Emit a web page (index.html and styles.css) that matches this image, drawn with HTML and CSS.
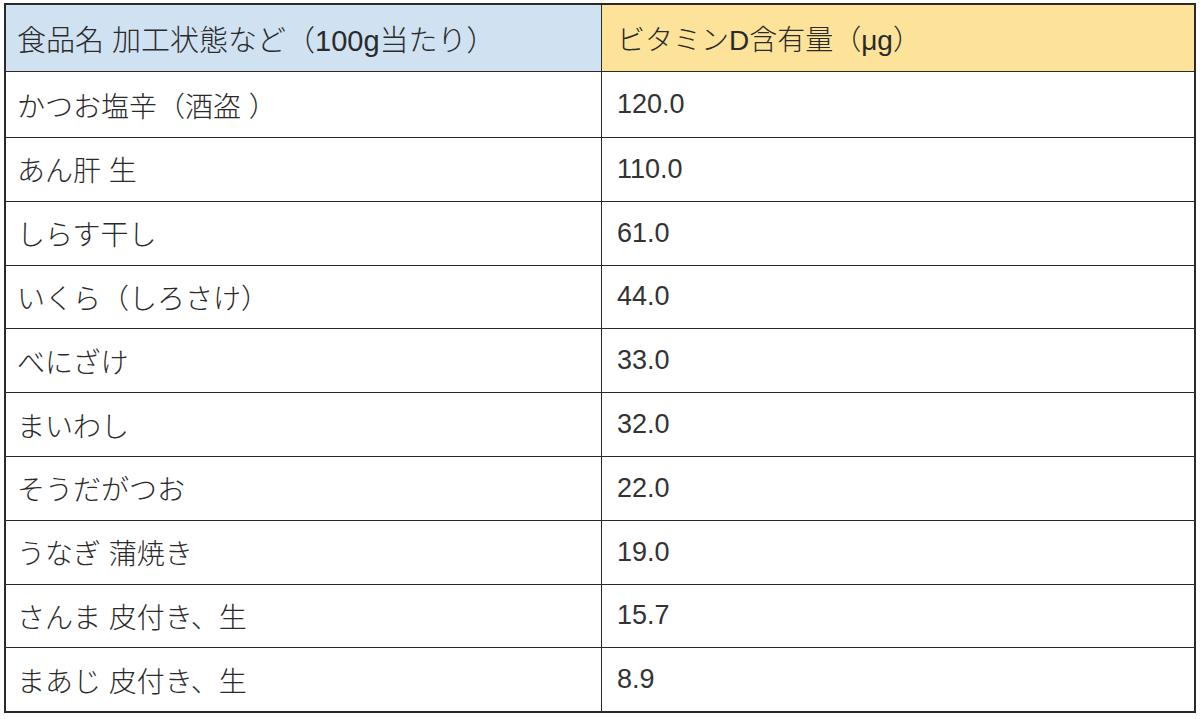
FILE: index.html
```html
<!DOCTYPE html>
<html lang="ja">
<head>
<meta charset="utf-8">
<link rel="stylesheet" href="styles.css">
</head>
<body>
<table class="vd-table">
  <thead>
    <tr>
      <th class="col-food">食品名 加工状態など（100g当たり）</th>
      <th class="col-amount">ビタミンD含有量（μg）</th>
    </tr>
  </thead>
  <tbody>
    <tr><td>かつお塩辛（酒盗 ）</td><td>120.0</td></tr>
    <tr><td>あん肝 生</td><td>110.0</td></tr>
    <tr><td>しらす干し</td><td>61.0</td></tr>
    <tr><td>いくら（しろさけ）</td><td>44.0</td></tr>
    <tr><td>べにざけ</td><td>33.0</td></tr>
    <tr><td>まいわし</td><td>32.0</td></tr>
    <tr><td>そうだがつお</td><td>22.0</td></tr>
    <tr><td>うなぎ 蒲焼き</td><td>19.0</td></tr>
    <tr><td>さんま 皮付き、生</td><td>15.7</td></tr>
    <tr><td>まあじ 皮付き、生</td><td>8.9</td></tr>
  </tbody>
</table>
</body>
</html>
```

FILE: styles.css
```css
html, body {
  margin: 0;
  padding: 0;
  background: #ffffff;
}
body {
  padding: 3px 4px 0 4px;
  font-family: "Liberation Sans", "Noto Sans CJK JP", sans-serif;
  color: #2a2a2a;
}
.vd-table {
  width: 1192px;
  border-collapse: collapse;
  table-layout: fixed;
  border: 2px solid #2a2a2a;
}
.vd-table th,
.vd-table td {
  border: 1.5px solid #2a2a2a;
  font-size: 28px;
  font-weight: 300;
  text-align: left;
  vertical-align: middle;
  padding: 0 0 0 11px;
  white-space: nowrap;
}
.vd-table th {
  height: 66px;
}
.vd-table td {
  height: 62.8px;
}
.vd-table tbody tr:first-child td {
  height: 65px;
}
.vd-table td:last-child,
.vd-table th:last-child {
  padding-left: 15px;
}
.vd-table .col-food {
  width: 584px;
  font-size: 29px;
  background: #d0e1f2;
}
.vd-table .col-amount {
  background: #fde39a;
}
.vd-table tbody td:last-child {
  font-size: 27px;
  color: #333333;
}
```
